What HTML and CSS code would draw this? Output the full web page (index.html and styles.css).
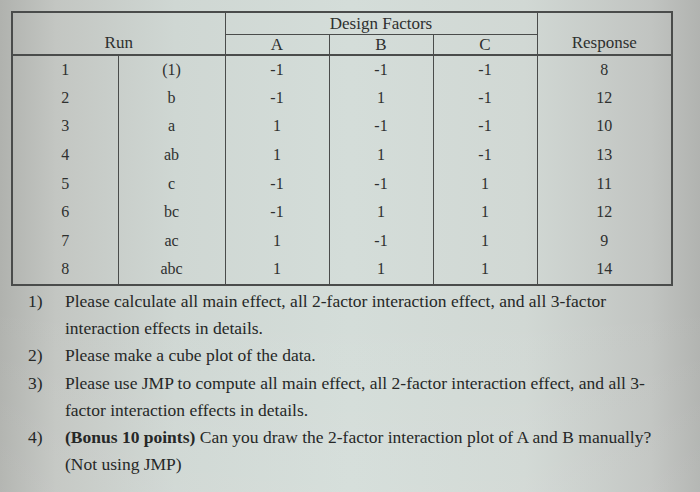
FILE: index.html
```html
<!DOCTYPE html>
<html>
<head>
<meta charset="utf-8">
<link rel="stylesheet" href="styles.css">
</head>
<body>
<div class="page">
  <table class="doe">
    <colgroup>
      <col class="c-run">
      <col class="c-code">
      <col class="c-f">
      <col class="c-f">
      <col class="c-f">
      <col class="c-resp">
    </colgroup>
    <thead>
      <tr class="h1">
        <th colspan="2" rowspan="2" class="bottom">Run</th>
        <th colspan="3" class="df">Design Factors</th>
        <th rowspan="2" class="bottom">Response</th>
      </tr>
      <tr class="h2">
        <th class="sub">A</th>
        <th class="sub">B</th>
        <th class="sub">C</th>
      </tr>
    </thead>
    <tbody>
      <tr><td>1</td><td>(1)</td><td>-1</td><td>-1</td><td>-1</td><td>8</td></tr>
      <tr><td>2</td><td>b</td><td>-1</td><td>1</td><td>-1</td><td>12</td></tr>
      <tr><td>3</td><td>a</td><td>1</td><td>-1</td><td>-1</td><td>10</td></tr>
      <tr><td>4</td><td>ab</td><td>1</td><td>1</td><td>-1</td><td>13</td></tr>
      <tr><td>5</td><td>c</td><td>-1</td><td>-1</td><td>1</td><td>11</td></tr>
      <tr><td>6</td><td>bc</td><td>-1</td><td>1</td><td>1</td><td>12</td></tr>
      <tr><td>7</td><td>ac</td><td>1</td><td>-1</td><td>1</td><td>9</td></tr>
      <tr><td>8</td><td>abc</td><td>1</td><td>1</td><td>1</td><td>14</td></tr>
    </tbody>
  </table>

  <ol class="questions">
    <li><span class="num">1)</span><span class="txt"><span class="ln">Please calculate all main effect, all 2-factor interaction effect, and all 3-factor</span><span class="ln">interaction effects in details.</span></span></li>
    <li><span class="num">2)</span><span class="txt"><span class="ln">Please make a cube plot of the data.</span></span></li>
    <li><span class="num">3)</span><span class="txt"><span class="ln">Please use JMP to compute all main effect, all 2-factor interaction effect, and all 3-</span><span class="ln">factor interaction effects in details.</span></span></li>
    <li><span class="num">4)</span><span class="txt"><span class="ln"><b>(Bonus 10 points)</b> Can you draw the 2-factor interaction plot of A and B manually?</span><span class="ln">(Not using JMP)</span></span></li>
  </ol>
</div>
</body>
</html>
```

FILE: styles.css
```css
html, body {
  margin: 0;
  padding: 0;
}

body {
  width: 700px;
  height: 492px;
  overflow: hidden;
  font-family: "Liberation Serif", "Times New Roman", serif;
  color: #2e302f;
  background:
    linear-gradient(180deg, rgba(255,255,255,0) 0%, rgba(255,255,255,0) 60%, rgba(255,255,255,0.06) 100%),
    linear-gradient(90deg, #b0b2ae 0%, #c3c6c2 8%, #cfd7d3 25%, #d4ddd9 50%, #d1d8d4 75%, #c1c4c1 93%, #b1b3b0 100%);
}

.page {
  padding: 11px 0 0 11px;
  box-sizing: border-box;
  height: 492px;
  display: flex;
  flex-direction: column;
}

.doe {
  border-collapse: collapse;
  table-layout: fixed;
  width: 660px;
  border: 2px solid #4a4c4b;
}

.c-run { width: 106px; }
.c-code { width: 107px; }
.c-f { width: 104px; }
.c-resp { width: 135px; }

.doe th {
  font-weight: normal;
  font-size: 17px;
  line-height: 18px;
  padding: 0;
  border-left: 1.5px solid #4a4c4b;
  border-right: 1.5px solid #4a4c4b;
  text-align: center;
}

.doe th.bottom {
  vertical-align: bottom;
  padding-bottom: 2px;
}

.h1 { height: 22px; }
.h2 { height: 20px; }

.doe th.df {
  border-bottom: 1.5px solid #4a4c4b;
  vertical-align: bottom;
  padding-bottom: 1px;
}

.doe th.sub {
  padding-top: 1px;
}

.doe thead {
  border-bottom: 2px solid #4a4c4b;
}

.doe td {
  font-size: 16px;
  height: 28.6px;
  padding: 0;
  text-align: center;
  vertical-align: middle;
  border-left: 1.5px solid #4a4c4b;
  border-right: 1.5px solid #4a4c4b;
}

.doe tbody tr:first-child td {
  height: 28px;
}

.questions {
  list-style: none;
  margin: 2px 0 0 0;
  padding: 0 0 0 17px;
  font-size: 17.5px;
  line-height: 27.3px;
  color: #262827;
}

.questions li {
  display: flex;
}

.questions .num {
  width: 37px;
  flex: none;
}

.questions .txt {
  display: flex;
  flex-direction: column;
}

.questions .ln {
  white-space: nowrap;
}

.questions b {
  font-weight: bold;
}
```
